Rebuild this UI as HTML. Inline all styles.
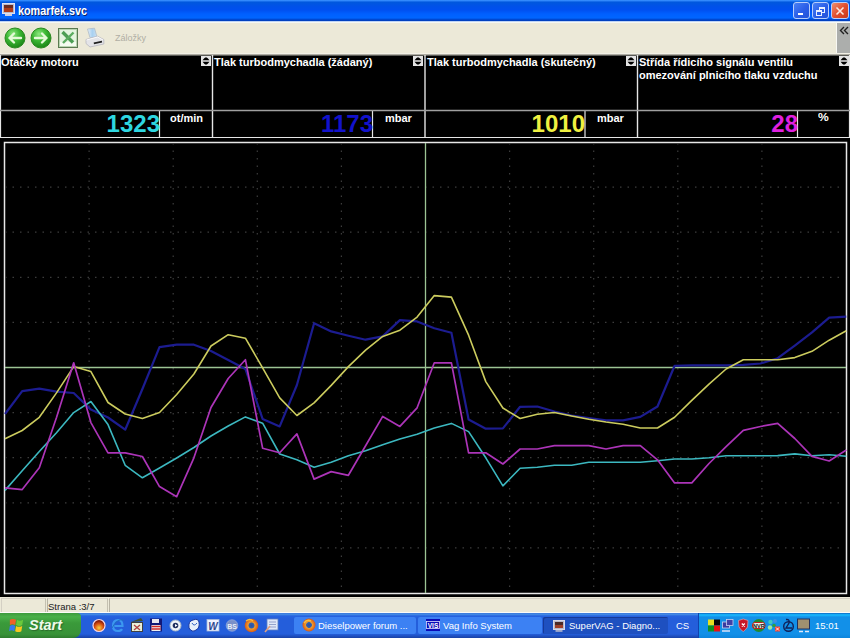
<!DOCTYPE html>
<html><head><meta charset="utf-8">
<style>
*{margin:0;padding:0;box-sizing:border-box}
html,body{width:850px;height:638px;overflow:hidden;background:#ece9d8;font-family:"Liberation Sans",sans-serif}
.a{position:absolute}
#title{left:0;top:0;width:850px;height:21px;background:linear-gradient(to bottom,#3a93ff 0px,#2a80f8 1px,#0058dd 2px,#0052e8 6px,#0050f0 10px,#0060ff 14px,#0066ff 18px,#0050e0 19px,#0040c0 20px,#0040c0 21px)}
#tline{left:0;top:21px;width:850px;height:2px;background:linear-gradient(to bottom,#c0d4f4 0px,#c0d4f4 0.8px,#f6f8f4 1px)}
#ttext{left:18px;top:5px;color:#fff;font-weight:bold;font-size:12px;line-height:13px;transform-origin:0 0;transform:scaleX(0.9);text-shadow:1px 1px 0 #0a246a}
.tb{top:2px;width:17px;height:17px;border:1px solid #b8cefa;border-radius:3px;background:linear-gradient(135deg,#4a80f4,#2a5ee8 55%,#2454d8)}
#toolbar{left:0;top:23px;width:850px;height:31px;background:#ece9d8}
#tbline{left:0;top:53px;width:850px;height:3px;background:linear-gradient(to bottom,#f2f0e6 0px,#f2f0e6 1px,#aeaca2 1px,#aeaca2 2px,#5a5a56 2px,#5a5a56 3px)}
#chev{left:836px;top:23px;width:14px;height:30px;background:#acaeac;border-left:1px solid #f8f8f4}
#main{left:0;top:56px;width:850px;height:541px;background:#000}
.hdr{color:#fff;font-weight:bold;font-size:11px;line-height:13px}
.vline{width:2px;background:#e8e8e8}
.val{font-weight:bold;font-size:24px;line-height:24px;text-align:right}
.unit{color:#fff;font-weight:bold;font-size:10px;line-height:11px;transform-origin:0 0;transform:scaleX(1.1)}
.ud{width:10px;height:10px;background:#e0e0e0}
#status{left:0;top:597px;width:850px;height:16px;background:#ece9d8}
#taskbar{left:0;top:613px;width:850px;height:25px;background:linear-gradient(to bottom,#3168d5 0px,#4993e6 1px,#2663e0 3px,#245edb 6px,#245edb 21px,#1941a5 25px)}
#start{left:0;top:613px;width:81px;height:25px;border-radius:0 4px 8px 0;background:linear-gradient(to bottom,#3c9a3c 0%,#49b049 15%,#3a9a3a 40%,#389238 85%,#2e7c2e 100%)}
.task{top:617px;height:17px;border-radius:2px;background:#3c81f3;color:#fff;font-size:9.5px;line-height:17px;white-space:nowrap;overflow:hidden}
#tray{left:698px;top:613px;width:152px;height:25px;background:linear-gradient(to bottom,#0c59b9 0px,#139ee9 1px,#18b9ff 2px,#1290e8 4px,#1290e8 21px,#0d85dc 25px);border-left:1px solid #1042af}
.qi{top:619px;width:13px;height:13px;border-radius:3px}
</style></head><body>
<div id="title" class="a"></div>
<div id="tline" class="a"></div>
<svg class="a" style="left:2px;top:3px" width="13" height="14" viewBox="0 0 13 14"><rect x="0.5" y="0.5" width="12" height="10" fill="#b8b8c8" stroke="#e0e0f0"/><rect x="2" y="2" width="9" height="7" fill="#6a2a20"/><rect x="2" y="5" width="9" height="4" fill="#b03a18"/><rect x="3" y="11" width="7" height="2" fill="#d0d0e0"/></svg>
<div id="ttext" class="a">komarfek.svc</div>
<div class="a tb" style="left:793px"><div class="a" style="left:4px;top:10px;width:5px;height:2px;background:#fff"></div></div>
<div class="a tb" style="left:812px"><div class="a" style="left:6px;top:4px;width:6px;height:6px;border:1px solid #e8f0ff;border-top-width:2px"></div><div class="a" style="left:3px;top:7px;width:6px;height:6px;border:1px solid #e8f0ff;border-top-width:2px;background:#2a5ee8"></div></div>
<div class="a tb" style="left:831px;width:18px;background:linear-gradient(135deg,#f09070,#e05030 50%,#c83818)"><svg class="a" style="left:3px;top:3px" width="10" height="10"><path d="M1.5 1.5L8.5 8.5M8.5 1.5L1.5 8.5" stroke="#fbe8e0" stroke-width="1.6"/></svg></div>

<div id="toolbar" class="a"></div>
<!-- back/forward icons -->
<svg class="a" style="left:4px;top:27px" width="22" height="22" viewBox="0 0 22 22">
<defs><radialGradient id="gg" cx="40%" cy="30%" r="75%"><stop offset="0" stop-color="#8ee880"/><stop offset="0.45" stop-color="#3cb834"/><stop offset="0.9" stop-color="#1e8a1a"/><stop offset="1" stop-color="#147010"/></radialGradient></defs>
<circle cx="11" cy="11" r="10" fill="url(#gg)" stroke="#2a8a20" stroke-width="1"/>
<path d="M5.5 11L10 6.5M5.5 11L10 15.5M5.5 11H17" stroke="#e4fad8" stroke-width="2.4" fill="none" stroke-linecap="round"/>
</svg>
<svg class="a" style="left:30px;top:27px" width="22" height="22" viewBox="0 0 22 22">
<circle cx="11" cy="11" r="10" fill="url(#gg)" stroke="#2a8a20" stroke-width="1"/>
<path d="M16.5 11L12 6.5M16.5 11L12 15.5M16.5 11H5" stroke="#e4fad8" stroke-width="2.4" fill="none" stroke-linecap="round"/>
</svg>
<svg class="a" style="left:58px;top:28px" width="20" height="20" viewBox="0 0 20 20">
<rect x="0.5" y="0.5" width="19" height="19" fill="#b8d4b0" stroke="#5a7a50"/>
<rect x="2" y="2" width="16" height="16" fill="#e4f4e0"/>
<rect x="2" y="14" width="16" height="4" fill="#f4fcf0"/>
<path d="M4.5 4L15 14.5" stroke="#4c9e54" stroke-width="3.4"/>
<path d="M15.5 4.5L5 15" stroke="#5aac60" stroke-width="2.4"/>
</svg>
<svg class="a" style="left:85px;top:27px" width="21" height="21" viewBox="0 0 21 21">
<defs><linearGradient id="pp" x1="0" y1="0" x2="1" y2="0"><stop offset="0" stop-color="#e8f0f8"/><stop offset="0.5" stop-color="#a8d0f0"/><stop offset="1" stop-color="#c8e0f4"/></linearGradient></defs>
<path d="M2.5 2L9.5 1.2L12 10L5 10.8Z" fill="url(#pp)" stroke="#b0bcc8" stroke-width="0.8"/>
<path d="M1 12.5L12.5 9.2L18.8 12.5L18.8 17L5 20L1 16.5Z" fill="#e4e4e8" stroke="#b8b8c0" stroke-width="0.8"/>
<path d="M1.5 13L12.5 10L18 13" fill="none" stroke="#fafafa" stroke-width="1"/>
<path d="M8.8 16.4L17 14.6" stroke="#202020" stroke-width="1.6"/>
</svg>
<div class="a" style="left:115px;top:33px;color:#b0aea4;font-size:9px">Záložky</div>
<div id="chev" class="a"><svg class="a" style="left:2px;top:3px" width="10" height="9" viewBox="0 0 10 9"><path d="M5 1L1.5 4.5L5 8M9 1L5.5 4.5L9 8" fill="none" stroke="#202020" stroke-width="1.4"/></svg></div>
<div id="tbline" class="a"></div>

<div id="main" class="a"></div>
<!-- panel grid lines -->
<svg class="a" style="left:0;top:0" width="850" height="140">
<g stroke="#e6e6e6">
<line x1="0.5" y1="55" x2="0.5" y2="138" stroke-width="1.2"/>
<line x1="212.5" y1="55" x2="212.5" y2="138" stroke-width="1.4"/>
<line x1="425" y1="55" x2="425" y2="138" stroke-width="1.4"/>
<line x1="637.5" y1="55" x2="637.5" y2="138" stroke-width="1.4"/>
<line x1="849.5" y1="55" x2="849.5" y2="138" stroke-width="1.2"/>
<line x1="159.5" y1="110" x2="159.5" y2="138" stroke-width="1.2"/>
<line x1="372.5" y1="110" x2="372.5" y2="138" stroke-width="1.2"/>
<line x1="585" y1="110" x2="585" y2="138" stroke-width="1.2"/>
<line x1="797.5" y1="110" x2="797.5" y2="138" stroke-width="1.2"/>
<line x1="0" y1="137.5" x2="850" y2="137.5" stroke-width="1.2"/>
</g>
<line x1="0" y1="110.5" x2="850" y2="110.5" stroke="#a0a0a0" stroke-width="1.6"/>
</svg>
<div class="a hdr" style="left:1px;top:56px">Otáčky motoru</div>
<div class="a hdr" style="left:214px;top:56px">Tlak turbodmychadla (žádaný)</div>
<div class="a hdr" style="left:427px;top:56px">Tlak turbodmychadla (skutečný)</div>
<div class="a hdr" style="left:639px;top:56px">Střída řídicího signálu ventilu<br>omezování plnicího tlaku vzduchu</div>

<svg class="a" style="left:201px;top:56px" width="10" height="10"><rect width="10" height="10" fill="#e4e4e4"/><path d="M1.5 4.3L3.5 2L5 1.2L6.5 2L8.5 4.3ZM1.5 5.7L3.5 8L5 8.8L6.5 8L8.5 5.7Z" fill="#000"/></svg>
<svg class="a" style="left:413px;top:56px" width="10" height="10"><rect width="10" height="10" fill="#e4e4e4"/><path d="M1.5 4.3L3.5 2L5 1.2L6.5 2L8.5 4.3ZM1.5 5.7L3.5 8L5 8.8L6.5 8L8.5 5.7Z" fill="#000"/></svg>
<svg class="a" style="left:626px;top:56px" width="10" height="10"><rect width="10" height="10" fill="#e4e4e4"/><path d="M1.5 4.3L3.5 2L5 1.2L6.5 2L8.5 4.3ZM1.5 5.7L3.5 8L5 8.8L6.5 8L8.5 5.7Z" fill="#000"/></svg>
<svg class="a" style="left:839px;top:56px" width="10" height="10"><rect width="10" height="10" fill="#e4e4e4"/><path d="M1.5 4.3L3.5 2L5 1.2L6.5 2L8.5 4.3ZM1.5 5.7L3.5 8L5 8.8L6.5 8L8.5 5.7Z" fill="#000"/></svg>

<div class="a val" style="left:2px;top:112px;width:158px;color:#2ed6e0">1323</div>
<div class="a val" style="left:214px;top:112px;width:159px;color:#1212cc">1173</div>
<div class="a val" style="left:427px;top:112px;width:158px;color:#f0f040">1010</div>
<div class="a val" style="left:639px;top:112px;width:159px;color:#e020e0">28</div>
<div class="a unit" style="left:170px;top:113px">ot/min</div>
<div class="a unit" style="left:385px;top:113px">mbar</div>
<div class="a unit" style="left:597px;top:113px">mbar</div>
<div class="a unit" style="left:818px;top:112px;font-size:11px">%</div>

<svg class="a" style="left:0;top:0" width="850" height="638">
<rect x="4.5" y="142.5" width="842" height="451" fill="none" stroke="#e8e8e8" stroke-width="1.5"/>
<g stroke="#3c3c3c" stroke-width="1.2" stroke-dasharray="1.5 6">
<line x1="89.1" y1="143" x2="89.1" y2="593" />
<line x1="173.2" y1="143" x2="173.2" y2="593" />
<line x1="257.3" y1="143" x2="257.3" y2="593" />
<line x1="341.4" y1="143" x2="341.4" y2="593" />
<line x1="509.6" y1="143" x2="509.6" y2="593" />
<line x1="593.7" y1="143" x2="593.7" y2="593" />
<line x1="677.8" y1="143" x2="677.8" y2="593" />
<line x1="761.9" y1="143" x2="761.9" y2="593" />
<line x1="5" y1="187.1" x2="846" y2="187.1" />
<line x1="5" y1="232.2" x2="846" y2="232.2" />
<line x1="5" y1="277.3" x2="846" y2="277.3" />
<line x1="5" y1="322.4" x2="846" y2="322.4" />
<line x1="5" y1="412.6" x2="846" y2="412.6" />
<line x1="5" y1="457.7" x2="846" y2="457.7" />
<line x1="5" y1="502.8" x2="846" y2="502.8" />
<line x1="5" y1="547.9" x2="846" y2="547.9" />
</g>
<line x1="5" y1="367.5" x2="846" y2="367.5" stroke="#9cc494" stroke-width="1.3"/>
<line x1="425.5" y1="143" x2="425.5" y2="593" stroke="#9cc494" stroke-width="1.3"/>
<g fill="none" stroke-linejoin="round">
<polyline points="5.0,414.0 22.2,391.2 39.3,388.6 56.5,391.7 73.7,393.0 90.9,409.6 108.0,417.5 125.2,429.7 142.4,389.0 159.5,347.2 176.7,344.7 193.9,344.7 211.0,351.0 228.2,360.0 245.4,369.0 262.6,418.9 279.7,426.4 296.9,385.0 314.1,323.2 331.2,331.4 348.4,335.7 365.6,339.7 382.7,336.4 399.9,320.1 417.1,321.4 434.3,328.2 451.4,332.7 468.6,419.5 485.8,428.7 502.9,428.4 520.1,406.8 537.3,406.5 554.4,411.5 571.6,415.5 588.8,418.0 606.0,420.3 623.1,420.3 640.3,416.9 657.5,406.5 674.6,365.8 691.8,365.3 709.0,365.3 726.1,365.3 743.3,364.8 760.5,363.5 777.7,358.2 794.8,345.6 812.0,332.4 829.2,317.6 846.3,316.7" stroke="#1c1c90" stroke-width="2.2"/>
<polyline points="5.0,438.8 22.2,430.5 39.3,417.3 56.5,392.9 73.7,366.6 90.9,371.6 108.0,402.5 125.2,414.0 142.4,418.5 159.5,412.5 176.7,394.5 193.9,374.0 211.0,346.0 228.2,334.7 245.4,338.2 262.6,367.8 279.7,397.9 296.9,415.5 314.1,402.9 331.2,385.4 348.4,366.6 365.6,350.2 382.7,336.4 399.9,330.2 417.1,317.1 434.3,295.6 451.4,297.1 468.6,335.2 485.8,381.6 502.9,408.0 520.1,418.5 537.3,414.2 554.4,412.5 571.6,416.0 588.8,419.2 606.0,422.0 623.1,424.3 640.3,428.0 657.5,428.0 674.6,417.3 691.8,400.4 709.0,384.1 726.1,369.0 743.3,359.7 760.5,359.7 777.7,359.7 794.8,357.6 812.0,351.3 829.2,340.2 846.3,330.8" stroke="#cccc5e" stroke-width="1.6"/>
<polyline points="5.0,490.4 22.2,470.8 39.3,451.5 56.5,432.7 73.7,412.6 90.9,401.5 108.0,424.6 125.2,465.3 142.4,477.8 159.5,468.0 176.7,458.0 193.9,447.5 211.0,436.0 228.2,426.0 245.4,416.9 262.6,423.2 279.7,454.0 296.9,459.8 314.1,467.3 331.2,462.3 348.4,455.8 365.6,450.7 382.7,444.7 399.9,439.0 417.1,434.2 434.3,428.1 451.4,423.4 468.6,431.6 485.8,457.8 502.9,485.9 520.1,468.3 537.3,467.3 554.4,465.3 571.6,465.3 588.8,462.3 606.0,462.3 623.1,462.3 640.3,462.3 657.5,460.8 674.6,459.0 691.8,459.0 709.0,457.8 726.1,455.8 743.3,455.8 760.5,455.8 777.7,455.6 794.8,453.9 812.0,455.7 829.2,454.7 846.3,456.3" stroke="#3cb8c0" stroke-width="1.6"/>
<polyline points="5.0,487.9 22.2,489.6 39.3,467.8 56.5,417.5 73.7,362.8 90.9,422.6 108.0,452.8 125.2,452.8 142.4,456.5 159.5,486.6 176.7,496.7 193.9,457.8 211.0,407.5 228.2,378.5 245.4,359.7 262.6,448.2 279.7,452.8 296.9,433.9 314.1,479.1 331.2,471.6 348.4,475.3 365.6,445.7 382.7,416.4 399.9,426.4 417.1,407.8 434.3,362.8 451.4,362.8 468.6,452.8 485.8,452.8 502.9,464.0 520.1,449.0 537.3,449.0 554.4,445.7 571.6,445.7 588.8,445.7 606.0,449.0 623.1,445.7 640.3,445.7 657.5,459.8 674.6,482.9 691.8,482.9 709.0,463.5 726.1,446.7 743.3,430.4 760.5,426.5 777.7,423.3 794.8,438.5 812.0,456.4 829.2,461.0 846.3,450.0" stroke="#ac34b8" stroke-width="1.7"/>
</g>
</svg>

<div id="status" class="a"></div>
<div class="a" style="left:0;top:612px;width:850px;height:1px;background:#fbfbf8"></div>
<div class="a" style="left:1px;top:598px;width:45px;height:14px;border-top:1px solid #d4d0c4;border-left:1px solid #d4d0c4;border-right:1px solid #c4c0b0"></div>
<div class="a" style="left:47px;top:598px;width:61px;height:14px;border-top:1px solid #d4d0c4;border-left:1px solid #b8b4a4;border-right:1px solid #c4c0b0"></div>
<div class="a" style="left:109px;top:598px;width:741px;height:14px;border-top:1px solid #d4d0c4;border-left:1px solid #b8b4a4"></div>
<div class="a" style="left:48px;top:601px;font-size:9.5px;line-height:12px;color:#202020">Strana :3/7</div>

<div id="taskbar" class="a"></div>
<div id="start" class="a"></div>
<svg class="a" style="left:9px;top:618px" width="15" height="15" viewBox="0 0 17 17">
<path d="M1 2Q4 0 8 2L7 8Q4 6 1 8Z" fill="#f06028"/>
<path d="M9 2Q12 4 16 2L15 8Q12 10 8 8Z" fill="#6ac83c"/>
<path d="M1 9Q4 7 7 9L6 15Q3 13 0 15Z" fill="#3878f0"/>
<path d="M8 9Q11 11 15 9L14 15Q11 17 7 15Z" fill="#f8c820"/>
</svg>
<div class="a" style="left:29px;top:617px;color:#eefaea;font-size:14.5px;line-height:17px;font-weight:bold;font-style:italic;text-shadow:1px 1px 1px #2a6a2a">Start</div>
<div id="tray" class="a"></div>
<svg class="a" style="left:0;top:613px" width="850" height="25" viewBox="0 613 850 25">
<defs>
<radialGradient id="ql1" cx="50%" cy="70%" r="60%"><stop offset="0" stop-color="#f8d040"/><stop offset="0.6" stop-color="#d85010"/><stop offset="1" stop-color="#801808"/></radialGradient>
<radialGradient id="ff" cx="50%" cy="50%" r="55%"><stop offset="0" stop-color="#2850a8"/><stop offset="0.35" stop-color="#3060b0"/><stop offset="0.45" stop-color="#f0a030"/><stop offset="1" stop-color="#d04810"/></radialGradient>
</defs>
<!-- quick launch -->
<circle cx="99" cy="625.5" r="6" fill="url(#ql1)" stroke="#f8d8e0" stroke-width="1.2"/>
<path d="M114.5 626H122.5Q122.5 620 118 620Q113 620 113 626Q113 631 118 631Q121 631 122 629" fill="none" stroke="#3c98f0" stroke-width="2.2"/>
<path d="M112 628Q117 618 124 620" fill="none" stroke="#2070c0" stroke-width="1"/>
<rect x="131.5" y="622.5" width="11" height="9" fill="#e8f0d8" stroke="#404040" stroke-width="1"/>
<path d="M131 622L141 618L143 621Z" fill="#405030"/>
<path d="M134 625L140 630M140 625L134 630" stroke="#b04040" stroke-width="1.3"/>
<rect x="150" y="618.5" width="12" height="13" fill="#101878"/>
<rect x="152" y="619" width="7" height="4" fill="#e8e8f0"/>
<rect x="151.5" y="625" width="9" height="6" fill="#f0f0f0"/>
<path d="M151.5 626.5H160.5M151.5 629H160.5" stroke="#d02828" stroke-width="1.3"/>
<circle cx="175.5" cy="625.5" r="5.5" fill="#f0f4f8" stroke="#a8b8c8" stroke-width="1"/>
<circle cx="175.5" cy="625.5" r="2.8" fill="#203060"/>
<path d="M175 624L177.5 625.5L175 627Z" fill="#fff"/>
<path d="M189 628Q188 621 193 620Q198 618 199 622Q200 628 196 630Q192 633 189 628Z" fill="#e8f0fa" stroke="#1838a0" stroke-width="1"/>
<path d="M192 623Q194 627 197 623" fill="none" stroke="#3060c0" stroke-width="1"/>
<rect x="207" y="619.5" width="12" height="11.5" fill="#f0f4ff" stroke="#a8b8d8" stroke-width="0.8"/>
<text x="213" y="629.5" font-family="Liberation Sans" font-weight="bold" font-style="italic" font-size="10" fill="#304a90" text-anchor="middle">W</text>
<circle cx="232" cy="625.5" r="5.8" fill="#7a90c8" stroke="#a8b8e0" stroke-width="0.6"/>
<text x="232" y="628.5" font-family="Liberation Sans" font-weight="bold" font-size="7" fill="#e8eef8" text-anchor="middle">BS</text>
<circle cx="251.5" cy="625.5" r="6.8" fill="url(#ff)"/>
<path d="M246 621Q250 618 253 621" stroke="#f8c040" stroke-width="1.4" fill="none"/>
<rect x="267" y="619" width="11" height="11" fill="#e0e8f8" stroke="#6080c0" stroke-width="0.8"/>
<path d="M269 622H276M269 624.5H276M269 627H276" stroke="#8090c0" stroke-width="0.8"/>
<path d="M265 632L270 626" stroke="#e0a080" stroke-width="1.6"/>
<!-- tray icons -->
<rect x="708" y="619.5" width="6" height="6" fill="#e8e020"/>
<rect x="714" y="619.5" width="6" height="6" fill="#080808"/>
<rect x="708" y="625.5" width="6" height="6" fill="#109020"/>
<rect x="714" y="625.5" width="6" height="6" fill="#e81010"/>
<rect x="722.5" y="622" width="7" height="6" fill="#3a3aa0" stroke="#c8d0f0" stroke-width="0.8"/>
<rect x="726.5" y="619.5" width="6.5" height="6" fill="#4040a8" stroke="#c8d0f0" stroke-width="0.8"/>
<path d="M722 631H730" stroke="#d8e0f8" stroke-width="1.5"/>
<path d="M738.5 620.5L743.3 619L748 620.5L747.5 627Q745 630.5 743.3 631.5Q741 630.5 739 627Z" fill="#c81828" stroke="#f0b0b0" stroke-width="0.6"/>
<path d="M741.8 623.5L744.8 626.5M744.8 623.5L741.8 626.5" stroke="#fff" stroke-width="1.2"/>
<circle cx="758.8" cy="625.5" r="6.4" fill="#208a30"/>
<rect x="752.5" y="622.5" width="12.5" height="6" rx="2.5" fill="#f0f0e8" stroke="#c02020" stroke-width="1"/>
<text x="758.8" y="627.6" font-family="Liberation Sans" font-weight="bold" font-size="5.6" fill="#101010" text-anchor="middle">NVR</text>
<circle cx="770.5" cy="622" r="2.2" fill="#40c8c0"/>
<circle cx="775" cy="621" r="2" fill="#4090e0"/>
<circle cx="770" cy="627.5" r="2.2" fill="#a0e8a0"/>
<circle cx="774" cy="625.5" r="1.8" fill="#30a040"/>
<rect x="775" y="626.5" width="5" height="5" fill="#f04030"/>
<path d="M776 627.5L779 630.5M779 627.5L776 630.5" stroke="#fff" stroke-width="0.9"/>
<circle cx="788.5" cy="626.5" r="4.8" fill="none" stroke="#102058" stroke-width="1.4"/>
<path d="M786 619.5Q790 619 789 623L786 628L792 628" fill="none" stroke="#102058" stroke-width="1.4"/>
<rect x="797.5" y="619" width="12" height="10" fill="#a09070" stroke="#203060" stroke-width="1"/>
<path d="M799 631.5H803M805 631.5H809" stroke="#e0e8f8" stroke-width="1.3"/>
</svg>
<div class="a task" style="left:294px;width:122px;padding-left:24px">Dieselpower forum ...</div>
<svg class="a" style="left:302px;top:618px" width="14" height="14" viewBox="0 0 14 14"><circle cx="7" cy="7" r="6.5" fill="url(#ff)"/><path d="M2 5Q5 1 9 3" stroke="#f8c040" stroke-width="1.5" fill="none"/></svg>
<div class="a task" style="left:418px;width:124px;padding-left:25px">Vag Info System</div>
<svg class="a" style="left:426px;top:619px" width="14" height="12" viewBox="0 0 14 12"><rect x="0" y="0" width="14" height="12" fill="#0a0ab8"/><rect x="0.5" y="2.5" width="13" height="7" fill="none" stroke="#e0e0ff" stroke-width="0.8"/><text x="7" y="8.6" font-family="Liberation Sans" font-size="6.5" font-weight="bold" fill="#fff" text-anchor="middle">VIS</text></svg>
<div class="a task" style="left:543px;width:125px;padding-left:26px;background:#1e50c0;box-shadow:inset 1px 1px 0 #163a98">SuperVAG - Diagno...</div>
<svg class="a" style="left:553px;top:620px" width="12" height="12" viewBox="0 0 12 12"><rect x="0.5" y="0.5" width="11" height="9" fill="#b8b8c8" stroke="#d8d8e8"/><rect x="2" y="2" width="8" height="6" fill="#4a2a28"/><rect x="2" y="5" width="8" height="3" fill="#a04028"/><rect x="2.5" y="10.2" width="7" height="1.5" fill="#c0c0d0"/></svg>
<div class="a" style="left:676px;top:617px;color:#fff;font-size:9.5px;line-height:17px">CS</div>
<div class="a" style="left:815px;top:617px;color:#fff;font-size:9.5px;line-height:17px">15:01</div>
</body></html>
